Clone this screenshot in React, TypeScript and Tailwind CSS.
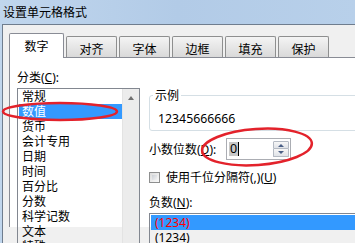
import React from "react";

const categories = [
  "常规",
  "数值",
  "货币",
  "会计专用",
  "日期",
  "时间",
  "百分比",
  "分数",
  "科学记数",
  "文本",
  "特殊",
];

const tabs = ["对齐", "字体", "边框", "填充", "保护"];

export default function App() {
  return (
    <div className="relative h-[243px] w-[355px] overflow-hidden bg-gradient-to-r from-[#c0d6ed] via-[#b2cbe7] to-[#b8d0ea] font-['Noto_Sans','Noto_Sans_CJK_SC',sans-serif] text-[12px] leading-[15px] text-black">
      {/* title bar */}
      <div className="flex h-[24px] items-center pl-[3px]">设置单元格格式</div>

      <div className="ml-[2px] h-[219px] border-l border-t border-[#6f7d8e] bg-[#f0f0f0]">
        {/* tabs */}
        <div className="flex items-end gap-[2px] pl-[6px] pt-[8px]">
          <div className="relative z-10 -mb-px flex h-[25px] w-[55px] items-center justify-center rounded-t-[2px] border border-b-0 border-[#898c95] bg-white">
            数字
          </div>
          {tabs.map((t) => (
            <div
              key={t}
              className="flex h-[21px] w-[51px] items-center justify-center rounded-t-[2px] border border-b-0 border-[#8e8f8f] bg-gradient-to-b from-[#f4f4f4] to-[#d9d9d9] pt-[4px]"
            >
              {t}
            </div>
          ))}
        </div>

        {/* tab panel */}
        <div className="ml-[6px] flex h-[170px] border-l border-t border-[#898c95] bg-white pl-[7px] pt-[12px]">
          {/* category list */}
          <div className="w-[123px] shrink-0">
            <div>
              分类(<span className="underline">C</span>):
            </div>
            <div className="mt-[3px] flex h-[160px] border border-[#828790]">
              <div className="flex-1 pl-[1px]">
                {categories.map((c, i) => (
                  <div
                    key={c}
                    className={
                      i === 1
                        ? "h-[15px] bg-[#3399ff] px-[3px] text-white"
                        : "h-[15px] px-[3px]"
                    }
                  >
                    {c}
                  </div>
                ))}
              </div>
              <div className="w-[17px] border-l border-[#e3e3e3] bg-[#ececec]">
                <div className="flex h-[17px] items-center justify-center">
                  <div className="h-0 w-0 border-x-[3.5px] border-b-[4px] border-x-transparent border-b-[#707070]" />
                </div>
              </div>
            </div>
          </div>

          {/* right side */}
          <div className="ml-[9px] w-[230px] shrink-0 pt-[18px]">
            <fieldset className="rounded-[3px] border border-[#d5dfe5] pb-[4px] pl-[3px]">
              <legend className="px-[2px] leading-[15px]">示例</legend>
              <div className="ml-[5px] mt-[8px] text-[12.3px]">12345666666</div>
            </fieldset>

            <div className="mt-[7px] flex h-[22px] items-center">
              <div className="w-[77px]">
                小数位数(<span className="underline">D</span>):
              </div>
              <div className="flex h-[22px] w-[65px] items-center border border-[#abadb3] bg-white pl-[2px]">
                <span className="bg-[#c8c8c8] px-[1px] text-[12.5px] leading-[14px]">0</span>
                <span className="h-[14px] w-px bg-black" />
                <div className="ml-auto mr-[1px] flex flex-col">
                  <div className="flex h-[8px] w-[16px] items-center justify-center rounded-t-[1px] border border-[#b4bac3] bg-gradient-to-b from-[#f7f7f7] to-[#e0e3e8]">
                    <div className="h-0 w-0 border-x-[3px] border-b-[3px] border-x-transparent border-b-[#4a5f86]" />
                  </div>
                  <div className="flex h-[8px] w-[16px] items-center justify-center rounded-b-[1px] border border-t-0 border-[#b4bac3] bg-gradient-to-b from-[#f7f7f7] to-[#e0e3e8]">
                    <div className="h-0 w-0 border-x-[3px] border-t-[3px] border-x-transparent border-t-[#4a5f86]" />
                  </div>
                </div>
              </div>
            </div>

            <div className="mt-[10px] flex h-[15px] items-center">
              <div className="h-[11px] w-[11px] border border-[#8e8f8f] bg-gradient-to-br from-[#dcdcdc] to-[#fafafa] p-[2px]">
                <div className="h-full w-full bg-gradient-to-br from-[#cbcfd5] to-[#f3f3f3]" />
              </div>
              <span className="ml-[6px]">
                使用千位分隔符(,)(<span className="underline">U</span>)
              </span>
            </div>

            <div className="mt-[10px]">
              负数(<span className="underline">N</span>):
            </div>
            <div className="mt-[3px] h-[60px] border border-[#828790] p-[1px]">
              <div className="h-[15px] bg-[#3399ff] px-[4px] text-[#ff0000]">(1234)</div>
              <div className="h-[15px] px-[4px]">(1234)</div>
            </div>
          </div>
        </div>
      </div>

      {/* red hand-drawn annotations */}
      <svg
        className="pointer-events-none absolute inset-0"
        width="355"
        height="243"
        viewBox="0 0 355 243"
      >
        <ellipse cx="60" cy="111.5" rx="57" ry="8.5" fill="none" stroke="#e3222b" strokeWidth="2.5" />
        <ellipse
          cx="257"
          cy="147"
          rx="55"
          ry="18"
          transform="rotate(-4 257 147)"
          fill="none"
          stroke="#e3222b"
          strokeWidth="2.5"
        />
      </svg>
    </div>
  );
}
